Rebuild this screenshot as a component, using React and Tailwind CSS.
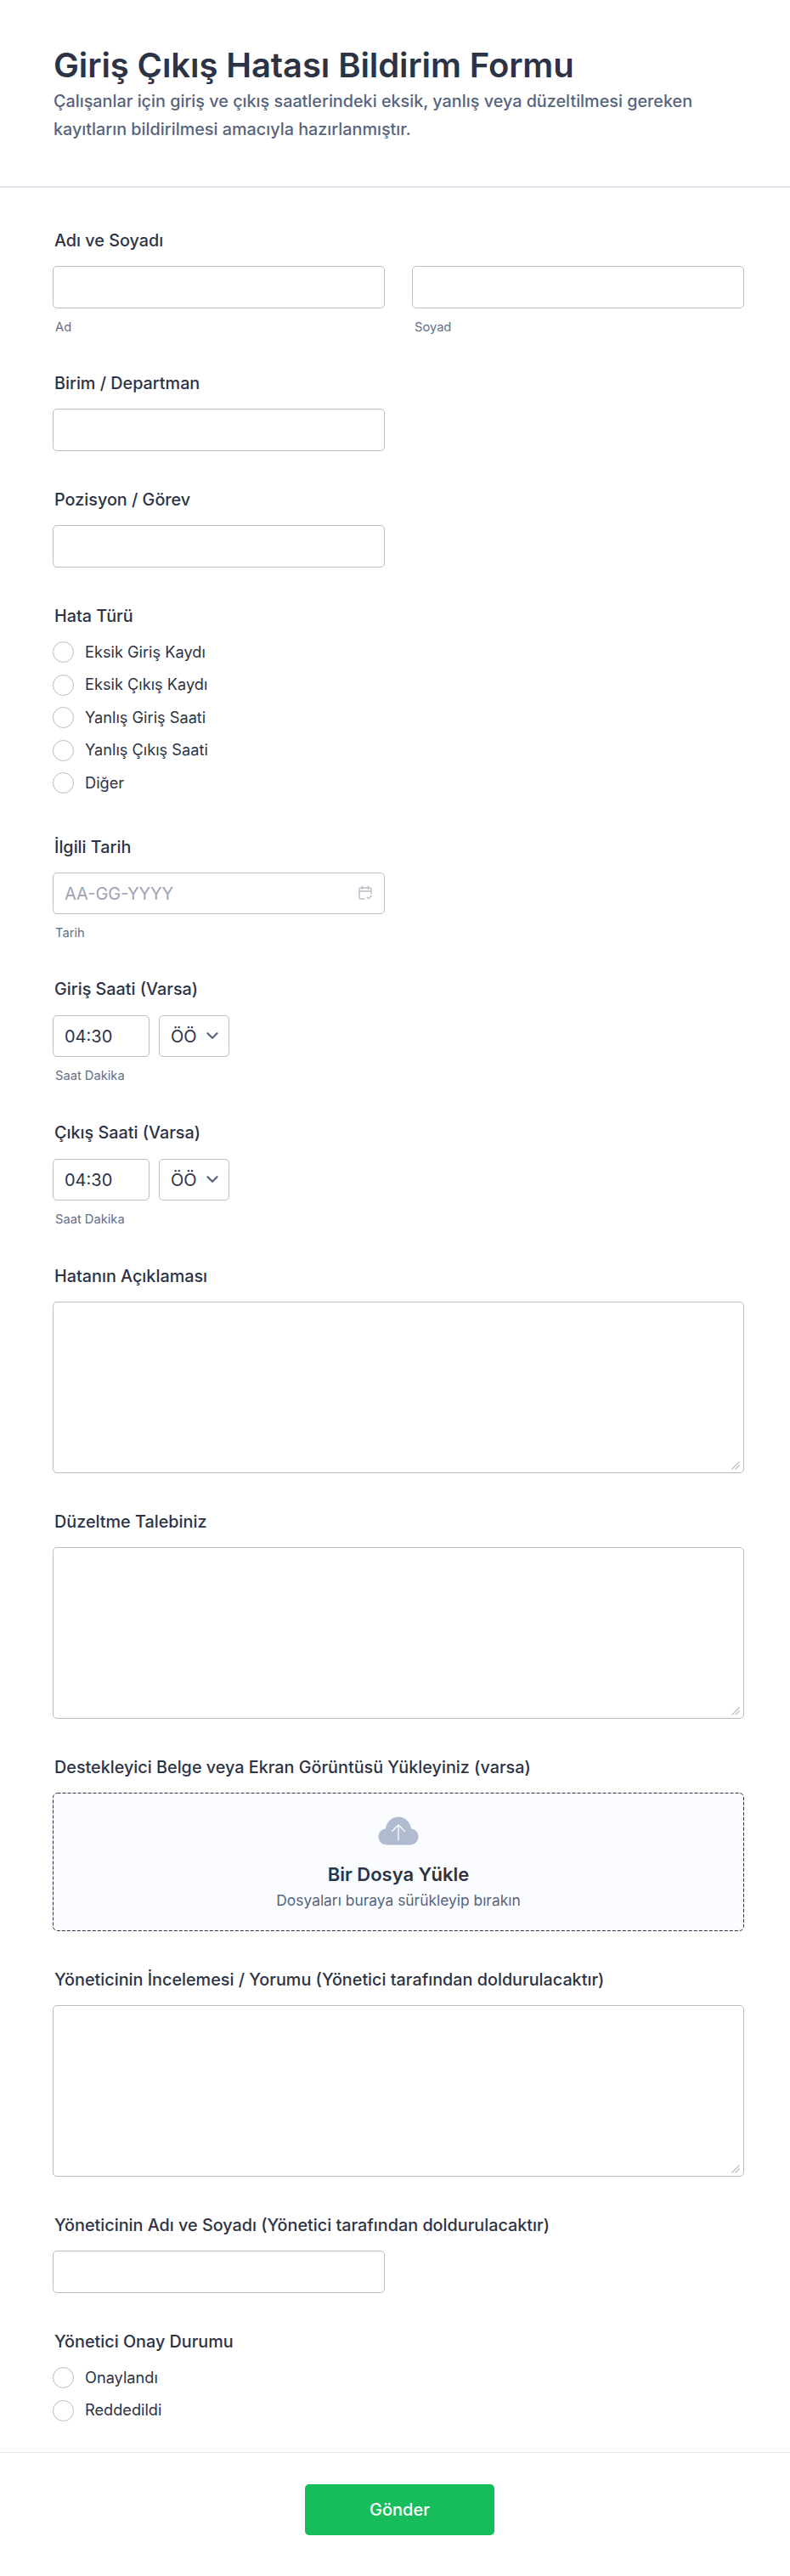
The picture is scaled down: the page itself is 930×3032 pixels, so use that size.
import React from "react"
import { ChevronDown } from "lucide-react"

const inputClass = "block rounded-[5px] border border-[#b8bdc9] bg-white px-[13px] text-[20px] text-[#2c3345] outline-none"

function Label({ children, className = "mb-[18px]" }) {
	return <label className={`block h-6 ${className} pl-[2px] text-[19.8px] leading-6 font-medium text-[#2c3345] whitespace-nowrap`}>{children}</label>
}

function Sub({ children }) {
	return <div className="mt-[13px] pl-[3px] h-[18px] text-[14.7px] leading-[18px] text-[#626e88]">{children}</div>
}

function Radios({ items }) {
	return (
		<div className="flex flex-col gap-[13.5px]">
			{items.map((item) => (
				<div key={item} className="flex items-center h-[25px]">
					<span className="w-[25px] h-[25px] shrink-0 rounded-full border border-[#b8bdc9] bg-white" />
					<span className="ml-[13px] text-[18.2px] text-[#2c3345]">{item}</span>
				</div>
			))}
		</div>
	)
}

function TimeField({ label }) {
	return (
		<section className="pb-px">
			<Label className="mb-[19px]">{label}</Label>
			<div className="flex gap-[11px]">
				<input className={`${inputClass} h-[49px] w-[114px]`} defaultValue="04:30" />
				<div className="relative w-[83px]">
					<select className={`${inputClass} h-[49px] w-full appearance-none`} defaultValue="ÖÖ">
						<option>ÖÖ</option>
						<option>ÖS</option>
					</select>
					<ChevronDown className="absolute right-[9px] top-[13px] w-[22px] h-[22px] text-[#57647e] pointer-events-none" strokeWidth={2.5} />
				</div>
			</div>
			<Sub>Saat Dakika</Sub>
		</section>
	)
}

function TextArea({ label }) {
	return (
		<section>
			<Label>{label}</Label>
			<div className="relative">
				<textarea className="block w-full h-[202px] resize-none rounded-[5px] border border-[#b8bdc9] bg-white p-3 text-lg outline-none" />
				<svg className="absolute right-[5px] bottom-[4px] w-[10px] h-[10px]" viewBox="0 0 10 10" fill="none" stroke="#b8bdc9" strokeWidth="1.200">
					<path d="M0.500 9.500L9.500 0.500M4.500 9.500L9.500 4.500" />
				</svg>
			</div>
		</section>
	)
}

export default function App() {
	return (
		<div className="w-[930px] bg-white" style={{ fontFamily: "Inter, sans-serif" }}>
			<header className="h-[221px] pt-[53px] pl-[63px] pr-[54px] border-b-2 border-[#e3e5ee]">
				<h1 className="text-[40px] leading-[48px] font-semibold tracking-[-0.1px] text-[#2c3345]">Giriş Çıkış Hatası Bildirim Formu</h1>
				<p className="mt-[2px] text-[19.8px] leading-[33px] font-medium text-[#57647e]">
					Çalışanlar için giriş ve çıkış saatlerindeki eksik, yanlış veya düzeltilmesi gereken kayıtların bildirilmesi amacıyla hazırlanmıştır.
				</p>
			</header>

			<main className="pl-[62px] pr-[54px] pt-[50px] flex flex-col gap-[45px]">
				<section>
					<Label>Adı ve Soyadı</Label>
					<div className="grid grid-cols-2 gap-[32px]">
						<div>
							<input className={`${inputClass} h-[50px] w-full`} />
							<Sub>Ad</Sub>
						</div>
						<div>
							<input className={`${inputClass} h-[50px] w-full`} />
							<Sub>Soyad</Sub>
						</div>
					</div>
				</section>

				<section>
					<Label>Birim / Departman</Label>
					<input className={`${inputClass} h-[50px] w-[391px]`} />
				</section>

				<section>
					<Label>Pozisyon / Görev</Label>
					<input className={`${inputClass} h-[50px] w-[391px]`} />
				</section>

				<section className="pb-[6px]">
					<Label>Hata Türü</Label>
					<Radios items={["Eksik Giriş Kaydı", "Eksik Çıkış Kaydı", "Yanlış Giriş Saati", "Yanlış Çıkış Saati", "Diğer"]} />
				</section>

				<section>
					<Label>İlgili Tarih</Label>
					<div className="relative w-[391px]">
						<input className={`${inputClass} h-[49px] w-full placeholder:text-[#9ea3b3]`} placeholder="AA-GG-YYYY" />
						<svg className="absolute right-[14px] top-[15px] w-[18px] h-[18px] text-[#b8bdc9]" viewBox="0 0 18 18" fill="none" stroke="currentColor" strokeWidth="1.400" strokeLinecap="round" strokeLinejoin="round">
							<path d="M8 16H3.500A1.500 1.500 0 0 1 2 14.500V4.500A1.500 1.500 0 0 1 3.500 3h11A1.500 1.500 0 0 1 16 4.500V10" />
							<path d="M2 7h14M5.500 1v3.500M12.500 1v3.500M11 14l1.800 1.800L16 12.500" />
						</svg>
					</div>
					<Sub>Tarih</Sub>
				</section>

				<TimeField label="Giriş Saati (Varsa)" />
				<TimeField label="Çıkış Saati (Varsa)" />
				<TextArea label="Hatanın Açıklaması" />
				<TextArea label="Düzeltme Talebiniz" />

				<section>
					<Label>Destekleyici Belge veya Ekran Görüntüsü Yükleyiniz (varsa)</Label>
					<div className="relative h-[163px] rounded-[5px] bg-[#fbfcff] flex flex-col items-center pt-[28px]">
						<svg className="absolute inset-0 w-full h-full" viewBox="0 0 814 163" fill="none">
							<rect x="0.500" y="0.500" width="813" height="162" rx="5" stroke="#2c3345" strokeDasharray="4 2" />
						</svg>
						<svg className="w-[48px] h-[34px]" viewBox="0 0 48 34" fill="none">
							<path d="M11 33.500C5 33.500 0.500 29.500 0.500 24C0.500 19 4 15.200 8.800 14.600C10 6.500 16.500 0.500 24 0.500C31.500 0.500 38 6.500 39.200 14.600C44 15.200 47.500 19 47.500 24C47.500 29.500 43 33.500 37 33.500Z" fill="#b1bbd0" />
							<path d="M24 28V10M16.500 17.500L24 10L31.500 17.500" stroke="#fff" strokeWidth="1.300" strokeLinecap="round" strokeLinejoin="round" />
						</svg>
						<div className="mt-[20px] text-[22px] leading-7 font-semibold text-[#2c3345]">Bir Dosya Yükle</div>
						<div className="mt-[5px] text-[17.4px] leading-6 text-[#57647e]">Dosyaları buraya sürükleyip bırakın</div>
					</div>
				</section>

				<TextArea label="Yöneticinin İncelemesi / Yorumu (Yönetici tarafından doldurulacaktır)" />

				<section>
					<Label>Yöneticinin Adı ve Soyadı (Yönetici tarafından doldurulacaktır)</Label>
					<input className={`${inputClass} h-[50px] w-[391px]`} />
				</section>

				<section>
					<Label>Yönetici Onay Durumu</Label>
					<Radios items={["Onaylandı", "Reddedildi"]} />
				</section>
			</main>

			<footer className="mt-[36px] border-t border-[#e3e5ee] h-[147px] pt-[37px] pl-[11px] flex justify-center">
				<button type="button" className="w-[223px] h-[60px] rounded-[5px] bg-[#18bd5b] text-[20px] font-medium text-white">Gönder</button>
			</footer>
		</div>
	)
}
